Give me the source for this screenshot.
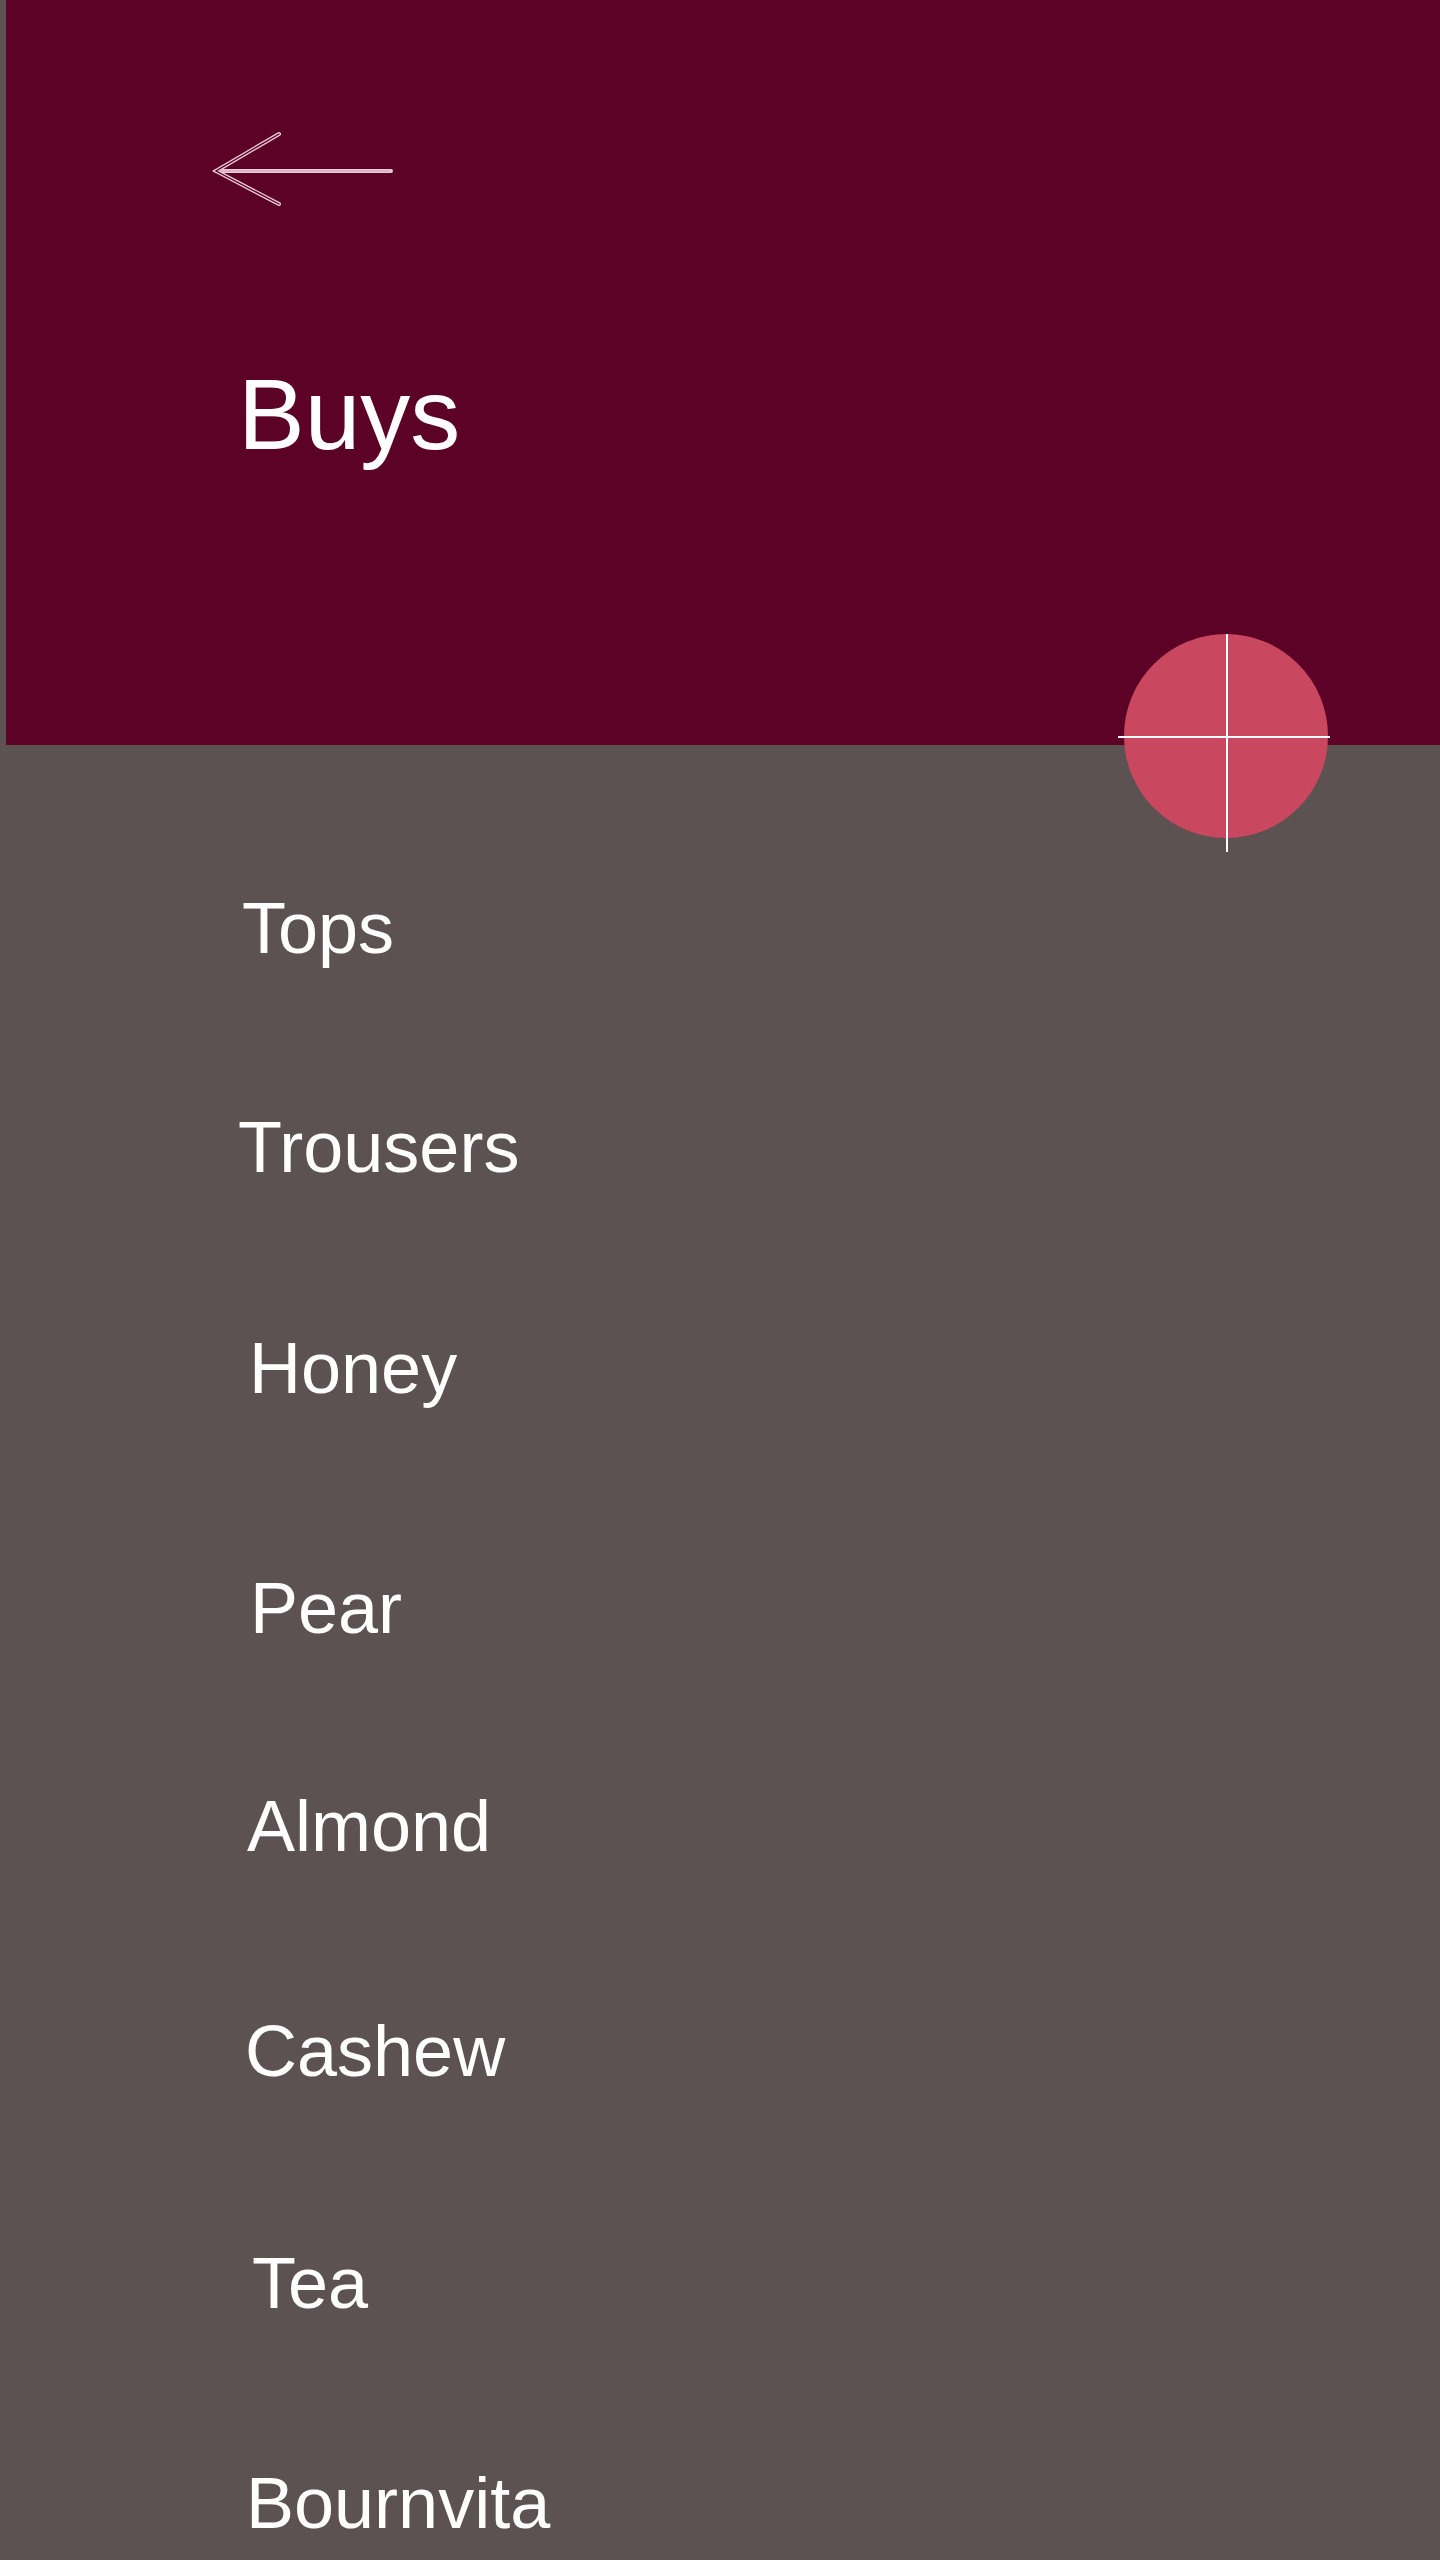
const items: { label: string; mt: string; pl: string }[] = [
  { label: "Tops", mt: "mt-[147px]", pl: "pl-[242px]" },
  { label: "Trousers", mt: "mt-[147px]", pl: "pl-[238px]" },
  { label: "Honey", mt: "mt-[149px]", pl: "pl-[249px]" },
  { label: "Pear", mt: "mt-[168px]", pl: "pl-[250px]" },
  { label: "Almond", mt: "mt-[146px]", pl: "pl-[247px]" },
  { label: "Cashew", mt: "mt-[153px]", pl: "pl-[245px]" },
  { label: "Tea", mt: "mt-[160px]", pl: "pl-[252px]" },
  { label: "Bournvita", mt: "mt-[148px]", pl: "pl-[246px]" },
];

function BackArrow() {
  return (
    <svg className="block" width="192" height="90" viewBox="0 0 192 90" fill="none">
      {/* outlined strokes: light rim with dark core */}
      <g stroke="#e9cdd6" strokeWidth="4" strokeLinecap="round">
        <path d="M10 47 L185 47" />
        <path d="M73 10 L10 47 L73 80" />
      </g>
      <g stroke="#5c0226" strokeWidth="1.4" strokeLinecap="round">
        <path d="M73 10 L10 47 L73 80" />
      </g>
      <path d="M12 47 L184 47" stroke="#c9a3b0" strokeWidth="1.2" />
    </svg>
  );
}

function AddButton() {
  return (
    <button
      aria-label="Add"
      className="absolute left-[1112px] top-[634px] h-[218px] w-[212px]"
    >
      <svg className="block" width="212" height="218" viewBox="0 0 212 218">
        <circle cx="108" cy="102" r="102" fill="#c9475f" />
        <path d="M0 103 L212 103" stroke="#fff" strokeWidth="2" />
        <path d="M109 0 L109 218" stroke="#fff" strokeWidth="2" />
      </svg>
    </button>
  );
}

export default function App() {
  return (
    <div className="h-[2560px] overflow-hidden bg-[#5c5252] font-['Liberation_Sans',Arial,sans-serif] text-white">
      {/* Header */}
      <header className="relative ml-[6px] h-[745px] bg-[#5c0226]">
        <div className="pl-[200px] pt-[124px]">
          <BackArrow />
        </div>
        <h1 className="mt-[150px] pl-[232px] text-[100px] leading-none">Buys</h1>
        <AddButton />
      </header>

      {/* List */}
      <ul>
        {items.map((it) => (
          <li key={it.label} className={`${it.mt} ${it.pl} text-[72px] leading-none`}>
            {it.label}
          </li>
        ))}
      </ul>
    </div>
  );
}
